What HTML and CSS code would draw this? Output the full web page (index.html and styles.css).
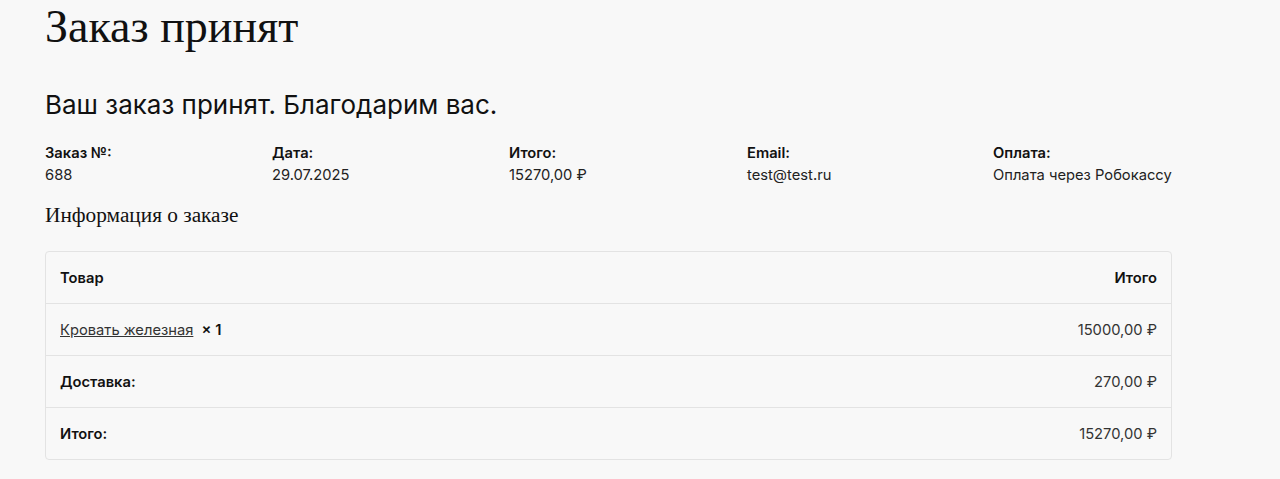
FILE: index.html
```html
<!DOCTYPE html>
<html lang="ru">
<head>
  <meta charset="UTF-8">
  <meta name="viewport" content="width=device-width, initial-scale=1.0">
  <title>Заказ принят</title>
  <link rel="stylesheet" href="styles.css">
</head>
<body>
  <div class="page">
    <h1 class="page-title">Заказ принят</h1>

    <p class="thanks">Ваш заказ принят. Благодарим вас.</p>

    <ul class="order-overview">
      <li class="col-order">Заказ №:<strong>688</strong></li>
      <li class="col-date">Дата:<strong>29.07.2025</strong></li>
      <li class="col-total">Итого:<strong>15270,00 ₽</strong></li>
      <li class="col-email">Email:<strong>test@test.ru</strong></li>
      <li class="col-method">Оплата:<strong>Оплата через Робокассу</strong></li>
    </ul>

    <h2 class="details-title">Информация о заказе</h2>

    <table class="order-details">
      <thead>
        <tr>
          <th>Товар</th>
          <th class="num">Итого</th>
        </tr>
      </thead>
      <tbody>
        <tr>
          <td><a href="#">Кровать железная</a> <span class="qty">× 1</span></td>
          <td class="num">15000,00 ₽</td>
        </tr>
      </tbody>
      <tfoot>
        <tr>
          <th>Доставка:</th>
          <td class="num">270,00 ₽</td>
        </tr>
        <tr>
          <th>Итого:</th>
          <td class="num">15270,00 ₽</td>
        </tr>
      </tfoot>
    </table>
  </div>
</body>
</html>
```

FILE: styles.css
```css
/* Reset */
* {
  box-sizing: border-box;
  margin: 0;
  padding: 0;
}

body {
  font-family: Inter, 'Noto Sans', sans-serif;
  background: #f8f8f8;
  color: #111;
  font-size: 0.92rem;
}

.page {
  width: 1127px;
  margin-left: 45px;
}

/* Titles */
.page-title {
  font-family: 'Liberation Serif', serif;
  font-weight: normal;
  font-size: 46px;
  line-height: 53px;
}

.thanks {
  font-size: 26px;
  line-height: 1.3;
  margin-top: 35px;
}

/* Order overview */
.order-overview {
  list-style: none;
  display: grid;
  grid-template-columns: 227px 237px 238px 246px auto;
  margin-top: 20px;
  line-height: 22px;
  font-weight: 600;
}
.order-overview li {
  white-space: nowrap;
}
.order-overview strong {
  display: block;
  font-weight: normal;
  color: #222;
}

.details-title {
  font-family: 'Liberation Serif', serif;
  font-weight: normal;
  font-size: 21.3px;
  line-height: 1.2;
  margin-top: 17px;
  margin-bottom: 23px;
}

/* Table */
.order-details {
  width: 100%;
  border: 1px solid #e3e3e3;
  border-radius: 4px;
  border-collapse: separate;
  border-spacing: 0;
}
.order-details th,
.order-details td {
  padding: 16px 14px 14px;
  line-height: 21px;
  text-align: left;
  font-weight: 600;
  border-top: 1px solid #e3e3e3;
}
.order-details thead th {
  border-top: none;
}
.order-details td {
  font-weight: normal;
  color: #333;
}
.order-details .num {
  text-align: right;
}
.order-details a {
  color: #333;
}
.order-details .qty {
  font-weight: 600;
  color: #111;
  margin-left: 4px;
}
```
